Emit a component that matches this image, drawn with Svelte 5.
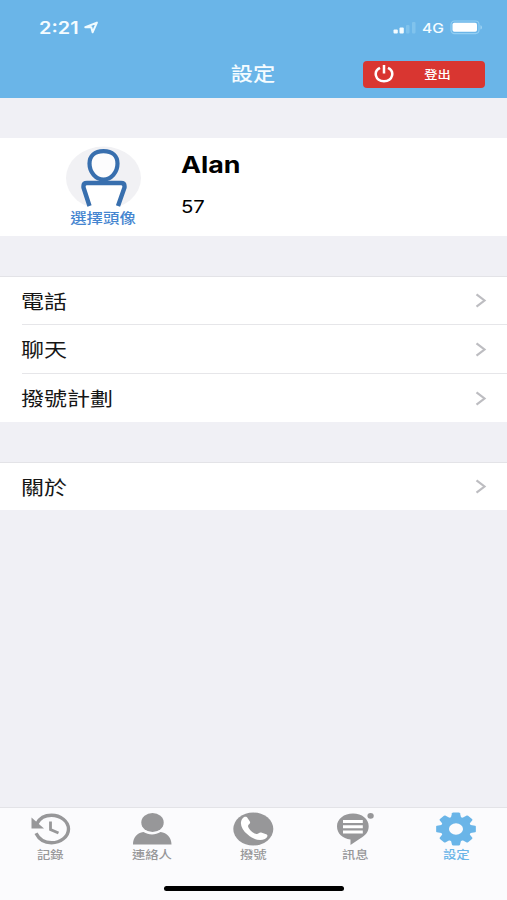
<script>
  // Settings screen of the softphone app.
  let active = $state('settings');

  const groups = [
    ['電話', '聊天', '撥號計劃'],
    ['關於'],
  ];

  const tabs = [
    { id: 'history', label: '記錄' },
    { id: 'contacts', label: '連絡人' },
    { id: 'dial', label: '撥號' },
    { id: 'messages', label: '訊息' },
    { id: 'settings', label: '設定' },
  ];

  const teeth = [0, 45, 90, 135, 180, 225, 270, 315];
</script>

<div class="screen">
  <header class="top">
    <div class="status">
      <div class="clock">
        <span class="stretch time">2:21</span>
        <svg class="loc" width="15" height="13" viewBox="0 0 15 13"><path d="M1.3 6.2 12.9 1.6 8.6 11.3 7.3 6.3Z" fill="none" stroke="#effbff" stroke-width="2" stroke-linejoin="round" /></svg>
      </div>
      <div class="signal">
        <svg width="24" height="13" viewBox="0 0 24 13">
          <rect x="0.5" y="8.5" width="4.3" height="4" rx="1" fill="#f4fcff" />
          <rect x="6.5" y="6.5" width="4.3" height="6" rx="1" fill="#f4fcff" />
          <rect x="13" y="4" width="3.5" height="8.5" rx="1" fill="#80c3ed" />
          <rect x="19" y="1" width="3.5" height="11.5" rx="1" fill="#80c3ed" />
        </svg>
        <span class="stretch net">4G</span>
        <svg class="battery" width="34" height="15" viewBox="0 0 34 15">
          <rect x="1" y="1" width="28" height="12.6" rx="3.5" fill="none" stroke="#93cff3" stroke-width="1.1" />
          <rect x="2.5" y="2.8" width="24.5" height="9" rx="1.8" fill="#fff" />
          <path d="M30.5 5.2c1.8.6 1.8 3.8 0 4.4z" fill="#a5d7f5" />
        </svg>
      </div>
    </div>
    <div class="nav">
      <h1>設定</h1>
      <button type="button" class="logout">
        <svg width="20" height="18" viewBox="0 0 20 18"><path d="M6 2.8C-1 6.3 1 16.2 10 16.2S21 6.3 14 2.8M10 0v8.500" fill="none" stroke="#fff" stroke-width="2.5" /></svg>
        <span>登出</span>
      </button>
    </div>
  </header>

  <section class="profile">
    <div class="avatar">
      <svg width="76" height="64" viewBox="0 0 76 64">
        <ellipse cx="37.5" cy="32" rx="37.5" ry="31.5" fill="#f1f1f4" />
        <path d="M24 64 17 41v-2q0-3 4-3h34q4 0 4 3v2L52 64z" fill="#fff" />
        <path d="M37.5 5.2c9 0 14 4.8 14 12.3 0 9-6.4 16-14 16s-14-7-14-16c0-7.500 5-12.300 14-12.300z" fill="#fcfcfd" stroke="#386fae" stroke-width="4.2" />
        <path d="M23.500 60 17.500 41.500v-1.500q0-3 3.500-3h34q3.500 0 3.500 3v1.500L52 60" fill="none" stroke="#386fae" stroke-width="4.4" stroke-linejoin="round" />
      </svg>
      <span>選擇頭像</span>
    </div>
    <div class="who">
      <span class="stretch name">Alan</span>
      <span class="stretch ext">57</span>
    </div>
  </section>

  {#each groups as rows}
    <ul class="group">
      {#each rows as row}
        <li>
          <span class="stretch">{row}</span>
          <svg width="12" height="15" viewBox="0 0 12 15"><path d="M1.5 1.3 9.5 7.5 1.5 13.7" fill="none" stroke="#bdbdc1" stroke-width="2.2" /></svg>
        </li>
      {/each}
    </ul>
  {/each}

  <nav class="tabs">
    {#each tabs as tab}
      <button type="button" class="tab" class:on={active === tab.id} onclick={() => (active = tab.id)}>
        <svg width="44" height="36" viewBox="0 0 44 36">
          {#if tab.id === 'history'}
            <path d="M8 12.5C11 6.5 16.5 4.2 22.5 4.2 31.5 4.2 39.5 10.3 39.5 18s-8 13.8-17 13.8c-7 0-12.5-3.5-15.5-9.5" fill="none" stroke="currentColor" stroke-width="3.4" />
            <path d="M2.5 6.5V17.500H15z" fill="currentColor" />
            <path d="M21.500 10.500V18.500l8 3.500" fill="none" stroke="currentColor" stroke-width="2.8" />
          {:else if tab.id === 'contacts'}
            <ellipse cx="22.5" cy="11.5" rx="11.2" ry="9.5" fill="currentColor" />
            <path d="M3 33.5c0-7 4-11.7 10.5-12.5 5 3.3 12 3.3 17 0C37 21.8 41.5 26.5 41.5 33.5z" fill="currentColor" />
          {:else if tab.id === 'dial'}
            <ellipse cx="22.3" cy="18" rx="20" ry="16.5" fill="currentColor" />
            <path d="M11.5 7.5c1.5-2.2 4-2.5 5.200-.3l2.300 3.600c.9 2-2.500 2.700-1.900 4.700 1 3.200 4.500 6.300 8 7.500 2.300.7 2.800-2 5.100-1.400l5 1.600c2.500 1.200 1 3.500-1.300 4.800-5 2.500-11.500.5-17.200-4.500C10.500 18.500 8 12 11.500 7.500z" fill="#fff" />
          {:else if tab.id === 'messages'}
            <path d="M20 2.500C29 2.500 35.700 8 35.700 15.200c0 5.800-3.500 9.300-8.200 12L17.500 34v-5.500C9.500 27.500 4 22.500 4 15.200 4 8 11 2.500 20 2.500z" fill="currentColor" />
            <path d="M10 10.500h19.800M10 15.700h19.800M10 20.900h19.800" stroke="#fff" stroke-width="3" />
            <ellipse cx="37.600" cy="4.800" rx="3.200" ry="2.900" fill="currentColor" />
          {:else}
            <g transform="translate(22 18) scale(1.21 1)" fill="currentColor">
              {#each teeth as a}
                <path d="M-4.300-11-3.300-15.800Q-3.100-16.400-2.300-16.400H2.300Q3.100-16.400 3.300-15.800L4.300-11z" transform="rotate({a})" />
              {/each}
              <circle r="9.2" fill="none" stroke="currentColor" stroke-width="6.8" />
            </g>
          {/if}
        </svg>
        <span>{tab.label}</span>
      </button>
    {/each}
  </nav>
  <div class="home"><i></i></div>
</div>

<style>
  :global(body) { margin: 0; }
  .screen {
    --blue: #6ab5e8;
    width: 507px; height: 900px; display: flex; flex-direction: column; overflow: hidden;
    background: #f0f0f5; color: #161616;
    font-family: Inter, 'Noto Sans CJK TC', sans-serif;
  }
  .stretch { display: inline-block; transform-origin: left center; }
  .top { height: 98px; flex: none; background: var(--blue); color: #f5fcff; }
  .status { height: 54px; box-sizing: border-box; padding: 1px 23px 0 39px; display: flex; justify-content: space-between; align-items: center; }
  .clock, .signal { display: flex; align-items: center; }
  .time { width: 45px; font-size: 17px; font-weight: 600; transform: scaleX(1.17); }
  .net { width: 28px; margin-left: 5px; font-size: 13px; font-weight: 500; transform: scaleX(1.2); }
  .nav { height: 40px; display: grid; grid-template-columns: 1fr auto 1fr; align-items: center; }
  h1 { grid-column: 2; margin: 2px 0 0; font-size: 19px; line-height: 32px; font-weight: 500; transform: scaleX(1.17); }
  .logout {
    justify-self: end; margin-right: 22px; width: 122px; height: 27px; padding: 0 36px 1px 11px; border: 0; border-radius: 4px;
    display: flex; align-items: center; justify-content: space-between; background: #d93631; color: #fff;
    font: 500 11.5px 'Noto Sans CJK TC', sans-serif;
  }
  .logout span { transform: scaleX(1.15); }
  .profile { flex: none; height: 98px; margin-top: 40px; display: flex; background: #fff; }
  .avatar { width: 76px; margin-left: 66px; padding-top: 8px; display: flex; flex-direction: column; align-items: center; }
  .avatar svg { flex: none; }
  .avatar span { margin: -1px 3px 0 0; color: #4585d0; font-size: 14px; line-height: 18px; font-weight: 500; white-space: nowrap; transform: scaleX(1.17); }
  .who { margin-left: 39px; padding-top: 12px; display: flex; flex-direction: column; color: #000; }
  .name { font-size: 22.5px; line-height: 30px; font-weight: 700; transform: scaleX(1.19); }
  .ext { margin-top: 13px; font-size: 17.5px; line-height: 28px; transform: scaleX(1.16); }
  .group { flex: none; margin: 40px 0 0; padding: 0; list-style: none; background: #fff; border-top: 1px solid #e3e3e7; }
  .group li { height: 48px; box-sizing: border-box; margin-left: 22px; padding-right: 20px; display: flex; align-items: center; justify-content: space-between; font-size: 19.5px; line-height: 30px; }
  .group li:first-child { height: 47px; }
  .group li + li { height: 49px; border-top: 1px solid #e6e6e9; }
  .group li .stretch { margin: 2px 0 0 -1px; transform: scaleX(1.18); }
  .tabs { flex: none; height: 62px; margin-top: auto; display: grid; grid-template-columns: repeat(5, 1fr); background: #fbfbfd; border-top: 1px solid #e3e3e7; }
  .tab { padding: 3px 0 0; border: 0; background: none; display: flex; flex-direction: column; align-items: center; color: #979799; font: 400 11.3px 'Noto Sans CJK TC', sans-serif; }
  .tab.on { color: var(--blue); }
  .tab svg { flex: none; }
  .tab span { margin-top: -1px; line-height: 16px; font-weight: 500; transform: scaleX(1.18); }
  .home { flex: none; height: 30px; display: flex; justify-content: center; align-items: center; background: #fbfbfd; }
  .home i { width: 180px; height: 5px; border-radius: 3px; background: #000; margin: 7px 0 0 1px; }
</style>
